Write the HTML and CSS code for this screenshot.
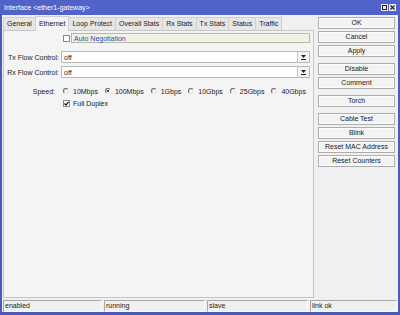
FILE: index.html
```html
<!DOCTYPE html>
<html lang="en">
<head>
  <meta charset="UTF-8" />
  <title>Interface &lt;ether1-gateway&gt;</title>
  <link rel="stylesheet" href="styles.css">
</head>
<body>
  <div class="window">
    <div class="titlebar">
      <span class="title">Interface &lt;ether1-gateway&gt;</span>
      <span class="winbtns">
        <span class="wb"><svg width="5" height="5" viewBox="0 0 5 5"><rect x="0.5" y="0.5" width="4" height="4" fill="none" stroke="#222" stroke-width="1"/></svg></span>
        <span class="wb"><svg width="5" height="5" viewBox="0 0 5 5"><path d="M0.5 0.5L4.5 4.5M4.5 0.5L0.5 4.5" stroke="#222" stroke-width="1.2"/></svg></span>
      </span>
    </div>

    <div class="main">
      <div class="left">
        <div class="tabs">
          <span class="tab">General</span>
          <span class="tab active">Ethernet</span>
          <span class="tab">Loop Protect</span>
          <span class="tab">Overall Stats</span>
          <span class="tab">Rx Stats</span>
          <span class="tab">Tx Stats</span>
          <span class="tab">Status</span>
          <span class="tab">Traffic</span>
        </div>

        <div class="panel">
          <div class="row autoneg">
            <span class="check"></span>
            <div class="field note">Auto Negotiation</div>
          </div>

          <div class="row line">
            <span class="lbl">Tx Flow Control:</span>
            <div class="field select">
              <span class="val">off</span>
              <span class="drop"><svg width="5" height="6" viewBox="0 0 5 6"><path d="M0 1H5L2.5 4Z" fill="#222"/><path d="M0 5.5H5" stroke="#222" stroke-width="1"/></svg></span>
            </div>
          </div>

          <div class="row line second">
            <span class="lbl">Rx Flow Control:</span>
            <div class="field select">
              <span class="val">off</span>
              <span class="drop"><svg width="5" height="6" viewBox="0 0 5 6"><path d="M0 1H5L2.5 4Z" fill="#222"/><path d="M0 5.5H5" stroke="#222" stroke-width="1"/></svg></span>
            </div>
          </div>

          <div class="row speed">
            <span class="lbl lbl-speed">Speed:</span>
            <div class="radios">
              <span class="radio"><span class="dot"></span>10Mbps</span>
              <span class="radio"><span class="dot on"></span>100Mbps</span>
              <span class="radio"><span class="dot"></span>1Gbps</span>
              <span class="radio"><span class="dot"></span>10Gbps</span>
              <span class="radio"><span class="dot"></span>25Gbps</span>
              <span class="radio"><span class="dot"></span>40Gbps</span>
            </div>
          </div>

          <div class="row duplex">
            <span class="check on"><svg width="5" height="5" viewBox="0 0 5 5"><path d="M0.5 2.5L2 4L4.5 0.8" fill="none" stroke="#111" stroke-width="1.2"/></svg></span>
            <span>Full Duplex</span>
          </div>
        </div>
      </div>

      <div class="actions">
        <div class="group">
          <span class="btn">OK</span>
          <span class="btn">Cancel</span>
          <span class="btn">Apply</span>
        </div>
        <div class="group">
          <span class="btn">Disable</span>
          <span class="btn">Comment</span>
        </div>
        <div class="group">
          <span class="btn">Torch</span>
        </div>
        <div class="group">
          <span class="btn">Cable Test</span>
          <span class="btn">Blink</span>
          <span class="btn">Reset MAC Address</span>
          <span class="btn">Reset Counters</span>
        </div>
      </div>
    </div>

    <div class="statusbar">
      <span class="cell">enabled</span>
      <span class="cell">running</span>
      <span class="cell">slave</span>
      <span class="cell">link ok</span>
    </div>
  </div>
</body>
</html>
```

FILE: styles.css
```css
* {
  box-sizing: border-box;
}

body {
  margin: 0;
  background: #f0f0f0;
  color: #1a1a1a;
  font-family: "Liberation Sans", Arial, sans-serif;
  font-size: 7px;
}

.window {
  width: 400px;
  height: 315px;
  display: flex;
  flex-direction: column;
  background: #f0f0f0;
  border: solid #4a5bbf;
  border-width: 0 2px 3px 2px;
}

/* title bar */
.titlebar {
  flex: none;
  height: 15px;
  margin: 0 -2px;
  padding: 0 4px;
  display: flex;
  align-items: center;
  justify-content: space-between;
  background: #5163c9;
  color: #fff;
}

.winbtns {
  display: flex;
  gap: 1px;
}

.wb {
  width: 7px;
  height: 7px;
  display: flex;
  align-items: center;
  justify-content: center;
  background: #ececec;
}

/* main area */
.main {
  flex: 1;
  min-height: 0;
  display: flex;
  gap: 4px;
  padding: 1px 1px 0 1px;
}

.left {
  width: 311px;
  flex: none;
  display: flex;
  flex-direction: column;
  margin-bottom: 1px;
}

.tabs {
  display: flex;
  height: 14px;
  padding-top: 1px;
}

.tab {
  padding: 0 3px;
  line-height: 12px;
  border: 1px solid #cfcfcf;
  border-bottom: none;
  background: #e6e6e6;
  margin-right: -1px;
}

.tab.active {
  position: relative;
  background: #f4f4f4;
  margin-top: -1px;
  margin-bottom: -1px;
  line-height: 14px;
  z-index: 1;
}

.panel {
  flex: 1;
  border: 1px solid #c6c6c6;
  background: #f4f4f4;
  padding: 2px 3px 0 0;
}

.row {
  display: flex;
  align-items: center;
}

.autoneg {
  height: 10px;
  padding-left: 57px;
}

.check {
  width: 7px;
  height: 7px;
  flex: none;
  margin: 0 1px 0 2px;
  background: #fff;
  border: 1px solid #8a8a8a;
  display: flex;
  align-items: center;
  justify-content: center;
}

.field {
  flex: 1;
  height: 100%;
  display: flex;
  align-items: center;
  padding-left: 2px;
  background: #fff;
  border: 1px solid #b9b9b9;
}

.field.note {
  background: #f2f2e4;
  border-color: #b7b7a6;
  color: #3545b5;
}

.line {
  height: 12px;
  margin-top: 8px;
}

.line.second {
  margin-top: 3px;
}

.lbl {
  width: 57px;
  flex: none;
  text-align: right;
  padding-right: 2px;
}

.lbl-speed {
  padding-right: 6px;
}

.select .val {
  flex: 1;
}

.drop {
  width: 12px;
  height: 10px;
  display: flex;
  align-items: center;
  justify-content: center;
  background: #f3f3f3;
  border-left: 1px solid #c9c9c9;
}

.speed {
  height: 10px;
  margin-top: 8px;
}

.radios {
  display: flex;
  gap: 7px;
  padding-left: 2px;
}

.radio {
  display: flex;
  align-items: center;
  gap: 4px;
}

.dot {
  width: 6px;
  height: 6px;
  border-radius: 50%;
  border: 1px solid;
  border-color: #6a6a6a #e8e8e8 #e8e8e8 #6a6a6a;
  display: flex;
  align-items: center;
  justify-content: center;
}

.dot.on::after {
  content: "";
  width: 2px;
  height: 2px;
  border-radius: 50%;
  background: #111;
}

.duplex {
  height: 10px;
  margin-top: 2px;
  padding-left: 57px;
  gap: 3px;
}

.duplex .check {
  margin-right: 0;
}

/* right hand buttons */
.actions {
  width: 77px;
  flex: none;
  display: flex;
  flex-direction: column;
  gap: 6px;
  padding-top: 1px;
}

.group {
  display: flex;
  flex-direction: column;
  gap: 2px;
}

.btn {
  height: 12px;
  line-height: 10px;
  text-align: center;
  background: #f3f3f3;
  border: 1px solid #adadad;
  box-shadow: inset 0 0 0 1px #fbfbfb;
}

/* status bar */
.statusbar {
  flex: none;
  height: 13px;
  display: grid;
  grid-template-columns: 99px 101px 101px 1fr;
  gap: 2px;
  padding: 1px 1px 0 1px;
}

.cell {
  line-height: 10px;
  padding-left: 1px;
  border: 1px solid;
  border-color: #a8a8a8 #fafafa #fafafa #a8a8a8;
}
```
